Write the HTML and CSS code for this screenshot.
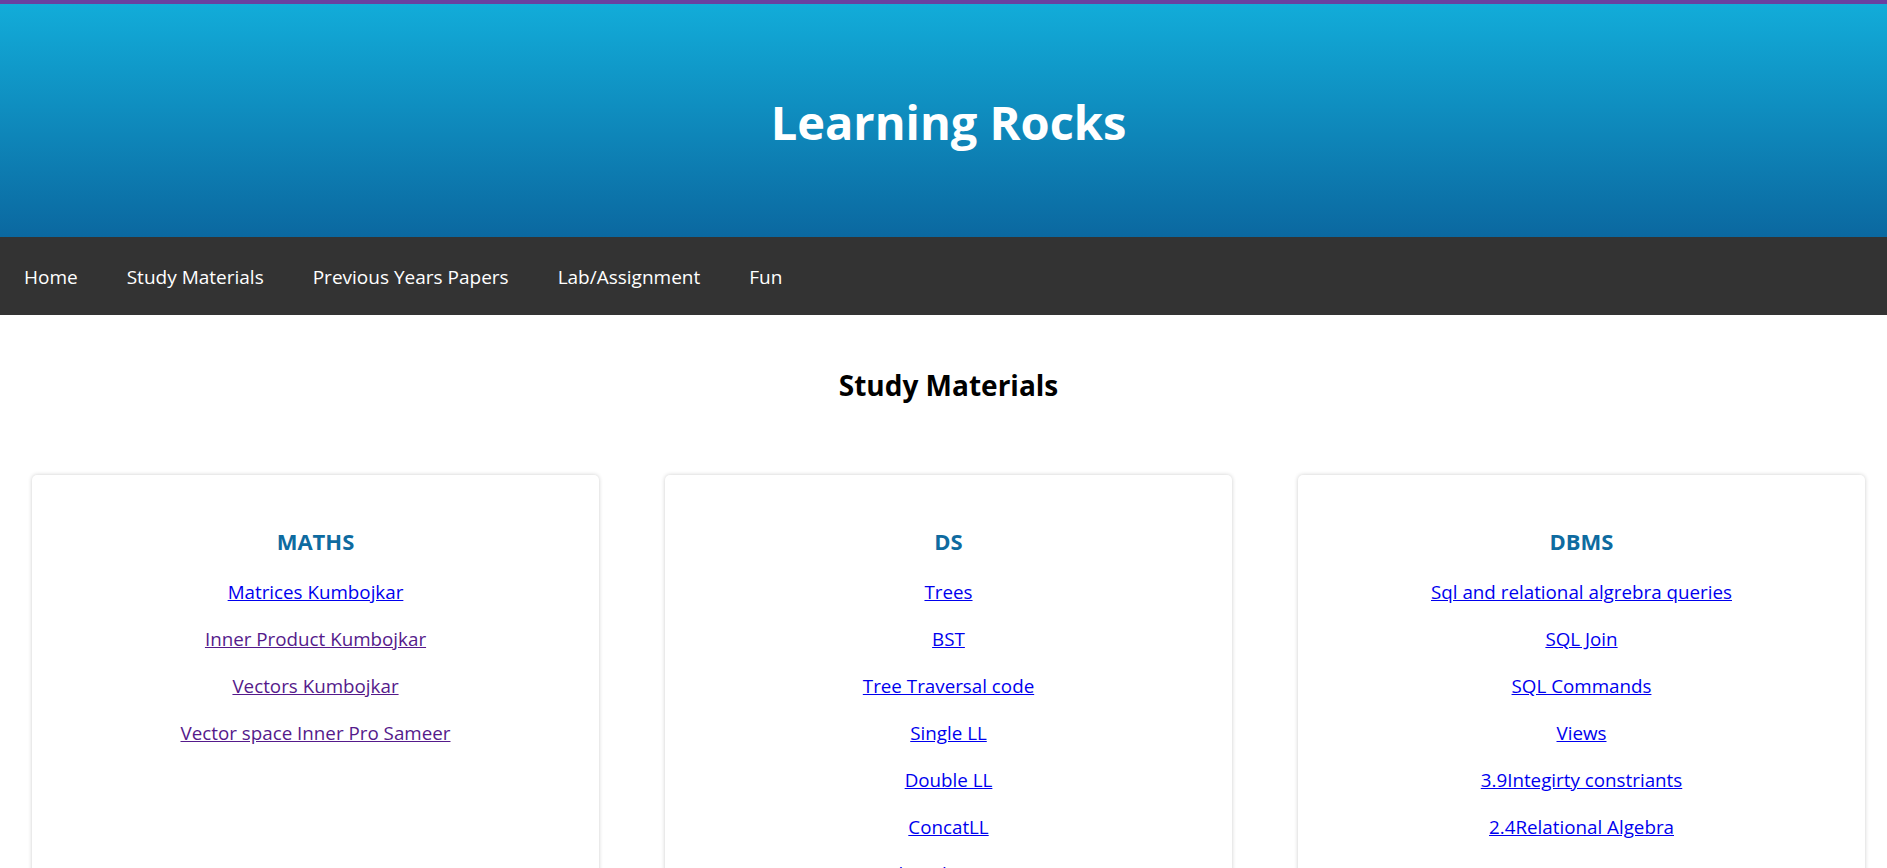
FILE: index.html
```html
<!DOCTYPE html>
<html lang="en">
<head>
<meta charset="utf-8">
<title>Learning Rocks</title>
<link rel="stylesheet" href="styles.css">
</head>
<body>
<header class="site-header">
  <h1 class="site-title">Learning Rocks</h1>
</header>
<nav class="main-nav">
  <a class="nav-link" href="#">Home</a>
  <a class="nav-link" href="#">Study Materials</a>
  <a class="nav-link" href="#">Previous Years Papers</a>
  <a class="nav-link" href="#">Lab/Assignment</a>
  <a class="nav-link" href="#">Fun</a>
</nav>
<main class="content">
  <h2 class="page-heading">Study Materials</h2>
  <section class="cards">
    <div class="card">
      <h3 class="card-title">MATHS</h3>
      <a class="card-link" href="#">Matrices Kumbojkar</a>
      <a class="card-link visited" href="#">Inner Product Kumbojkar</a>
      <a class="card-link visited" href="#">Vectors Kumbojkar</a>
      <a class="card-link visited" href="#">Vector space Inner Pro Sameer</a>
    </div>
    <div class="card">
      <h3 class="card-title">DS</h3>
      <a class="card-link" href="#">Trees</a>
      <a class="card-link" href="#">BST</a>
      <a class="card-link" href="#">Tree Traversal code</a>
      <a class="card-link" href="#">Single LL</a>
      <a class="card-link" href="#">Double LL</a>
      <a class="card-link" href="#">ConcatLL</a>
      <a class="card-link" href="#">Stack and Queue LL</a>
    </div>
    <div class="card">
      <h3 class="card-title">DBMS</h3>
      <a class="card-link" href="#">Sql and relational algrebra queries</a>
      <a class="card-link" href="#">SQL Join</a>
      <a class="card-link" href="#">SQL Commands</a>
      <a class="card-link" href="#">Views</a>
      <a class="card-link" href="#">3.9Integirty constriants</a>
      <a class="card-link" href="#">2.4Relational Algebra</a>
    </div>
  </section>
</main>
</body>
</html>
```
FILE: styles.css
```css
html, body {
  margin: 0;
  padding: 0;
}
body {
  font-family: "Open Sans", "Noto Sans", sans-serif;
  background: #ffffff;
  color: #000000;
}
.site-header {
  border-top: 4px solid #6a40a0;
  height: 233px;
  padding-left: 10px;
  background: linear-gradient(to bottom, #12acd9 0%, #0b68a0 100%);
  display: flex;
  align-items: center;
  justify-content: center;
}
.site-title {
  margin: 4px 0 0;
  color: #ffffff;
  font-size: 47px;
  font-weight: 700;
  line-height: 1;
}
.main-nav {
  background: #333333;
  height: 78px;
  display: flex;
  align-items: center;
}
.nav-link {
  color: #ffffff;
  text-decoration: none;
  font-size: 19px;
  padding: 2px 25px 0 24px;
}
.page-heading {
  margin: 50px 0 0;
  padding-left: 10px;
  text-align: center;
  font-size: 28px;
  font-weight: 700;
  line-height: 40px;
}
.cards {
  display: grid;
  grid-template-columns: repeat(3, 567px);
  column-gap: 66px;
  padding: 0 22px 0 32px;
  margin-top: 70px;
}
.card {
  background: #ffffff;
  border-radius: 5px;
  box-shadow: 0 0 4px rgba(0, 0, 0, 0.2);
  display: flex;
  flex-direction: column;
  align-items: center;
  padding: 51px 20px 40px;
  gap: 21px;
  min-height: 420px;
}
.card-title {
  margin: 0 0 2px;
  color: #0e6ba0;
  font-size: 22px;
  font-weight: 700;
  line-height: 30px;
}
.card-link {
  color: #0000ee;
  font-size: 18.8px;
  line-height: 26px;
}
.card-link.visited {
  color: #551a8b;
}
```
